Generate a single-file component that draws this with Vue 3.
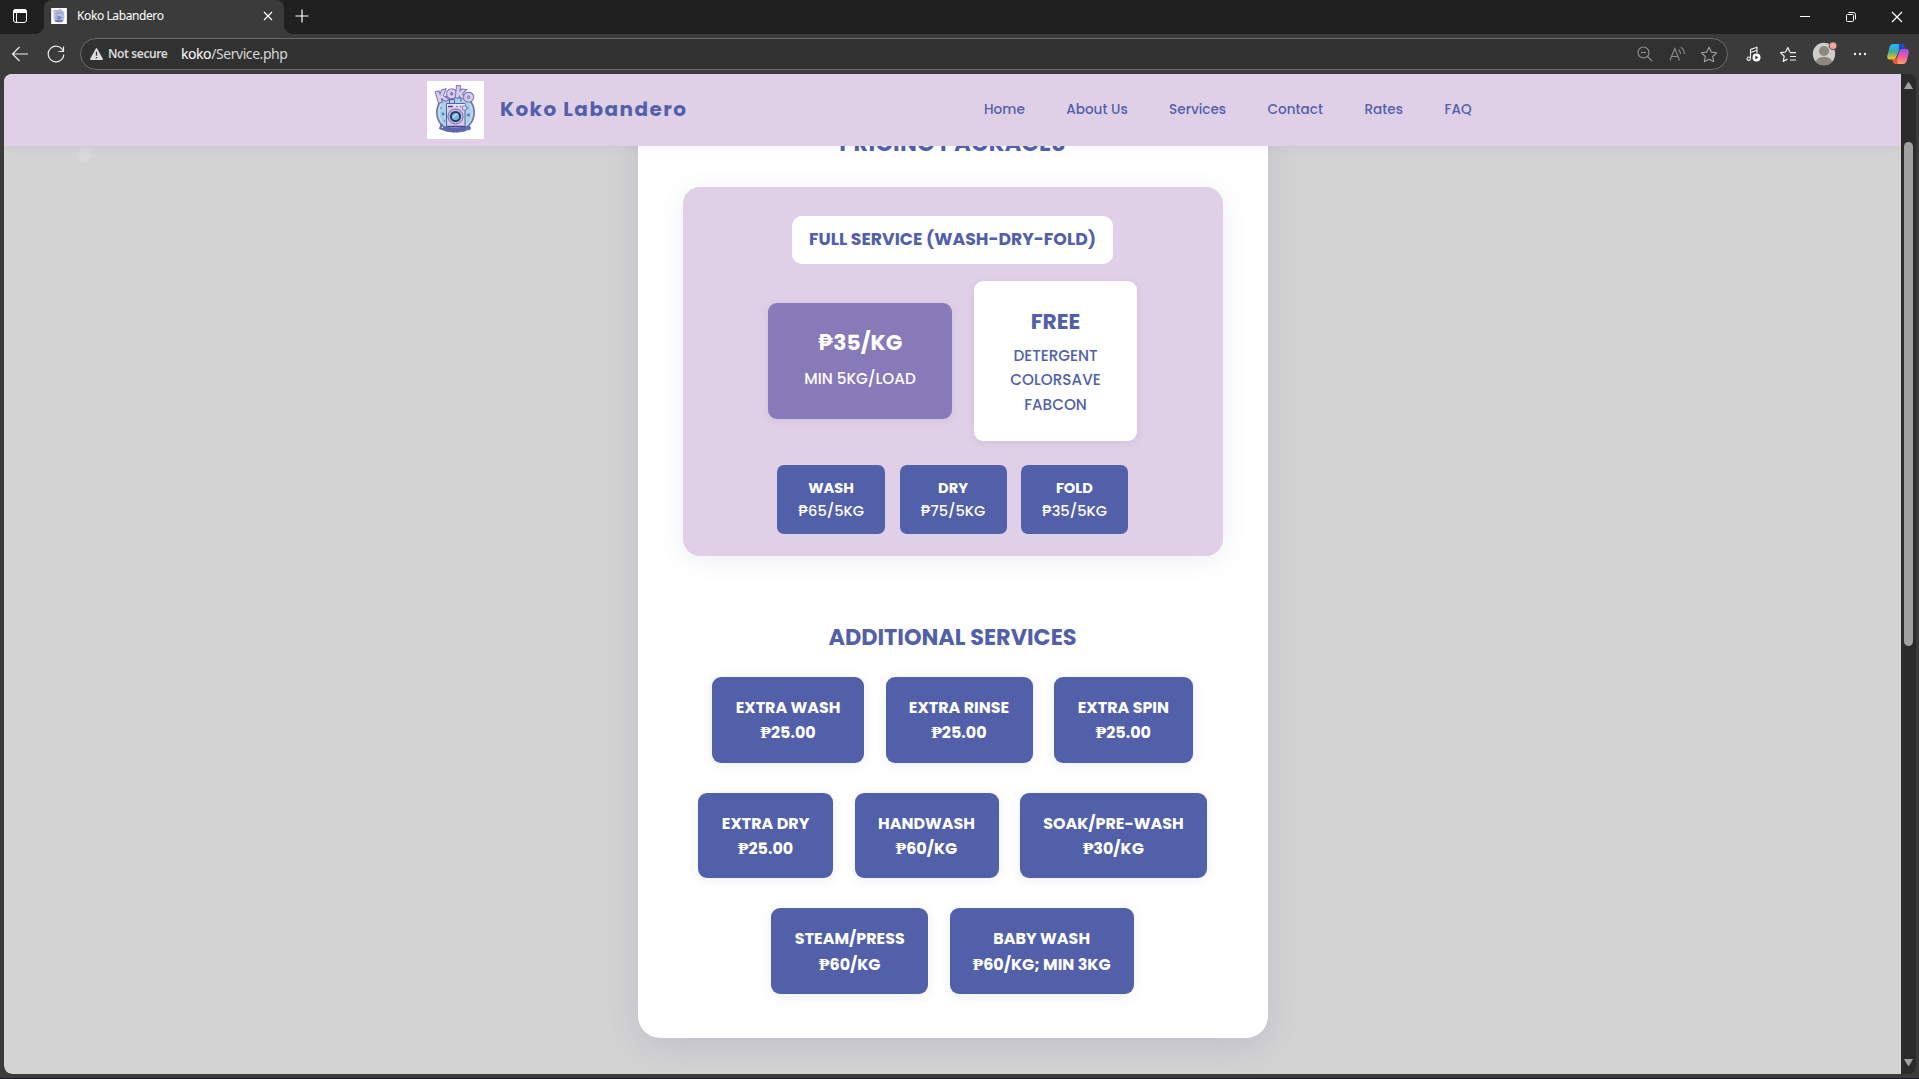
<script setup>
// Spreads the letters of a label so that it takes the given width in pixels.
const vFit = {
  mounted(el, { value }) {
    const natural = el.getBoundingClientRect().width
    const count = el.textContent.trim().length
    const spacing = (value - natural) / count
    el.style.letterSpacing = spacing.toFixed(3) + 'px'
  }
}

const nav = ['Home', 'About Us', 'Services', 'Contact', 'Rates', 'FAQ']

const free = ['DETERGENT', 'COLORSAVE', 'FABCON']

const steps = [
  { name: 'WASH', price: '₱65/5KG', box: 108 },
  { name: 'DRY', price: '₱75/5KG', box: 107 },
  { name: 'FOLD', price: '₱35/5KG', box: 107 }
]

const extras = [
  [
    { name: 'EXTRA WASH', price: '25.00', box: 152 },
    { name: 'EXTRA RINSE', price: '25.00', box: 147 },
    { name: 'EXTRA SPIN', price: '25.00', box: 139 }
  ],
  [
    { name: 'EXTRA DRY', price: '25.00', box: 135 },
    { name: 'HANDWASH', price: '60/KG', box: 144 },
    { name: 'SOAK/PRE-WASH', price: '30/KG', box: 187 }
  ],
  [
    { name: 'STEAM/PRESS', price: '60/KG', box: 157 },
    { name: 'BABY WASH', price: '60/KG; MIN 3KG', box: 184 }
  ]
]
</script>

<template>
  <div class="browser">
    <div class="tabs">
      <div class="workspace">
        <svg width="16" height="16" viewBox="0 0 16 16" fill="none" stroke="#fff">
          <rect x="1.500" y="1.500" width="13" height="13" rx="2.500" />
          <path d="M1.500 3.200q0-1.700 2-1.700h9q2 0 2 1.700v1.300h-13z" fill="#fff" />
          <path d="M4.500 5v9.500" />
        </svg>
      </div>
      <div class="tab">
        <svg class="favicon" width="16" height="16" viewBox="0 0 57 58"><use href="#koko" /></svg>
        <span class="tab-title" v-fit="86.5">Koko Labandero</span>
        <svg width="10" height="10" viewBox="0 0 10 10" stroke="#fff" stroke-width="1.200"><path d="M1 1l8 8M9 1l-8 8" /></svg>
      </div>
      <svg class="plus" width="14" height="14" viewBox="0 0 14 14" stroke="#fff" stroke-width="1.200"><path d="M7 .5v13M.5 7h13" /></svg>
      <div class="win">
        <span><svg width="12" height="12" stroke="#fff"><path d="M1 5.500h10" /></svg></span>
        <span><svg width="12" height="12" fill="none" stroke="#fff"><rect x="1.500" y="3.500" width="7" height="7" rx="1" /><path d="M3.500 1.500h5q2 0 2 2v5" /></svg></span>
        <span><svg width="12" height="12" stroke="#fff" stroke-width="1.200"><path d="M1 1l10 10M11 1l-10 10" /></svg></span>
      </div>
    </div>

    <div class="toolbar">
      <svg class="back" width="18" height="16" viewBox="0 0 18 16" fill="none" stroke="#eee" stroke-width="1.200"><path d="M17 8H1.500M8.500 1l-7 7 7 7" /></svg>
      <svg class="reload" width="18" height="18" viewBox="0 0 18 18" fill="none" stroke="#eee" stroke-width="1.200"><path d="M16.400 6.500A7.800 7.800 0 1 0 16.800 9.500M16.500 1.500v5h-5" /></svg>
      <div class="address">
        <svg width="13" height="12" viewBox="0 0 13 12"><path d="M6.500 .8L12.200 11.200H.8z" fill="#ddd" stroke="#ddd" stroke-width="1.400" stroke-linejoin="round" /><path d="M6.500 3.800v4M6.500 9v1.300" stroke="#333" stroke-width="1.300" /></svg>
        <span class="secure" v-fit="59.5">Not secure</span>
        <span class="url" v-fit="106.5"><b>koko</b>/Service.php</span>
        <div class="cells">
          <span><svg width="16" height="16" fill="none" stroke="#949494" stroke-width="1.100"><circle cx="6.500" cy="6.500" r="5.500" /><path d="M10.500 10.500l4.800 4.800M4 6.500h5" /></svg></span>
          <span><svg width="17" height="16" fill="none" stroke="#8c8c8c" stroke-width="1.100"><path d="M1 14.500L5.800 2.500 10.500 14.500M2.600 10.500h6.400M9.500 3.500q2 1.600 2 4.500M12 1.200q3.500 2.600 3.300 6.800" /></svg></span>
          <span><svg width="18" height="17" viewBox="0 0 18 17" fill="none" stroke="#a0a0a0" stroke-width="1.100" stroke-linejoin="round"><path d="M9 1.200l2.300 4.900 5.300.7-3.900 3.700 1 5.300L9 13.200l-4.700 2.600 1-5.300L1.400 6.800l5.300-.7z" /></svg></span>
        </div>
      </div>
      <div class="actions">
        <span><svg width="16" height="16" fill="none" stroke="#eee" stroke-width="1.100"><path d="M5.500 12.500V3.500l6.500-2.300v6M5.500 6.500l6.500-2.300" /><circle cx="3.700" cy="12.700" r="1.700" /><circle cx="11.500" cy="11.500" r="4" fill="#fff" stroke="none" /><path d="M10.300 9.500v4l3-2z" fill="#333" stroke="none" /></svg></span>
        <span><svg width="18" height="17" fill="none" stroke="#eee" stroke-width="1.200" stroke-linejoin="round"><path d="M11.300 5.800h-.5L8.800 1.500 6.600 6l-5 .7 3.600 3.500-1 5.200L8.500 13.100M11 6.700h6M11 10.500h6M11 14h6" /></svg></span>
        <span><svg class="avatar" width="26" height="24" viewBox="0 0 26 24"><clipPath id="av"><circle cx="12" cy="12" r="11.200" /></clipPath><circle cx="12" cy="12" r="11.200" fill="#d0cdca" /><circle cx="12" cy="9" r="5" fill="#8b8783" /><ellipse cx="12" cy="20" rx="8" ry="5.200" fill="#8b8783" clip-path="url(#av)" /><circle cx="21" cy="3.800" r="4.300" fill="#555" /><circle cx="21" cy="3.800" r="3.300" fill="#f9a29a" /></svg></span>
        <span><svg width="14" height="4" fill="#eee"><circle cx="2" cy="2" r="1.200" /><circle cx="7" cy="2" r="1.200" /><circle cx="12" cy="2" r="1.200" /></svg></span>
        <span>
          <svg width="22" height="22" viewBox="0 0 22 22">
            <defs>
              <linearGradient id="cpA" x1="0" y1="0" x2="0" y2="1"><stop offset=".1" stop-color="#28b4f5" /><stop offset=".5" stop-color="#3fa9a0" /><stop offset=".9" stop-color="#e3c51e" /></linearGradient>
              <linearGradient id="cpB" x1=".5" y1="0" x2=".3" y2="1"><stop offset="0" stop-color="#a44ee8" /><stop offset=".5" stop-color="#f0619a" /><stop offset="1" stop-color="#ffa65a" /></linearGradient>
            </defs>
            <path d="M6 1h8.500q2 0 2.700 3l.5 2h-3.500q-2 0-2.800 3L9 14.500q-.7 2-3 2H2.500Q-.3 16.500.4 12.500L2.300 5Q3.200 1 6 1z" fill="url(#cpA)" />
            <path d="M12 1h2.500q2 0 2.700 3l.5 2h-3.500q-1.800 0-2.500 2z" fill="#1848cf" />
            <path d="M16 21H8.500q-2 0-2.700-3l-.4-1.500h2Q9.600 16.500 10.400 14L12.500 8q.8-2 3-2h3.800q3 0 2.500 3.500L20 17q-1 4-4 4z" fill="url(#cpB)" />
            <path d="M5.400 16.500h2q2 0 2.800-2L10.800 21H8.500q-2 0-2.700-3z" fill="#f0543c" />
          </svg>
        </span>
      </div>
    </div>

    <div class="viewport">
      <div class="page">
        <header class="site-header">
          <svg class="logo" width="57" height="58" viewBox="0 0 57 58">
            <g id="koko">
              <rect width="57" height="58" fill="#fff" />
              <circle cx="28.500" cy="31.500" r="18.700" fill="#a5d3e4" stroke="#7d74b8" stroke-width="1.700" />
              <circle cx="28.500" cy="31.500" r="16.600" fill="none" stroke="#c5e5ee" />
              <g fill="#5c74b8">
                <circle cx="16" cy="33" r="1.400" /><circle cx="41.500" cy="34" r="1.500" />
                <circle cx="14" cy="27" r=".8" /><circle cx="41" cy="27" r=".8" />
                <circle cx="34" cy="19.500" r="1" /><circle cx="17.500" cy="40" r=".8" />
              </g>
              <path d="M22.500 22.500v-4h5v4" fill="#c4c2e8" stroke="#5c5fa8" />
              <path d="M19.500 22.500h18.500v24.500h-18.500z" fill="#d9cdec" stroke="#635ca8" />
              <path d="M20 23h18v3.500h-18z" fill="#e9e0f4" />
              <path d="M21 25.500h5M20 45.500h18" stroke="#3e4688" stroke-width="1.500" />
              <circle cx="30" cy="25.500" r=".8" fill="#5660a8" /><circle cx="33.500" cy="25.500" r=".8" fill="#5660a8" />
              <circle cx="37.500" cy="27" r="2.300" fill="#e5d9f1" stroke="#635ca8" stroke-width=".8" />
              <circle cx="28.500" cy="35.500" r="7.600" fill="#c1b8df" stroke="#7168ad" />
              <circle cx="28.500" cy="35.500" r="4.600" fill="#79bcd8" stroke="#2d3770" stroke-width="2" />
              <path d="M26 37q2-4 4.500-4" stroke="#d4f0f8" fill="none" />
              <g class="koko-word" text-anchor="middle">
                <text x="15" y="20.500" transform="rotate(-17 15 16)">K</text>
                <text x="24.500" y="17" transform="rotate(-5 24.500 13)">o</text>
                <text x="33.300" y="17" transform="rotate(7 33.300 12)">k</text>
                <text x="41.500" y="20.500" transform="rotate(18 41.500 16)">o</text>
              </g>
              <path id="ribbon" d="M12 47.500Q28.500 55 45 47.500" fill="none" />
              <text class="ribbon-word"><textPath href="#ribbon" textLength="33">Labandero</textPath></text>
            </g>
          </svg>
          <span class="brand" v-fit="187.5">Koko Labandero</span>
          <nav>
            <a v-for="n in nav" :key="n">{{ n }}</a>
          </nav>
        </header>
        <main>
          <i class="bubble"></i>
          <section class="card">
            <h2><span v-fit="226.5">PRICING PACKAGES</span></h2>
            <div class="panel">
              <div class="pill">FULL SERVICE (WASH-DRY-FOLD)</div>
              <div class="offers">
                <div class="offer rate">
                  <strong>₱35/KG</strong>
                  <p>MIN 5KG/LOAD</p>
                </div>
                <div class="offer free">
                  <strong>FREE</strong>
                  <p v-for="f in free" :key="f">{{ f }}</p>
                </div>
              </div>
              <div class="steps">
                <div v-for="s in steps" :key="s.name" class="step" :style="{ width: s.box + 'px' }">
                  <b>{{ s.name }}</b>
                  <p>{{ s.price }}</p>
                </div>
              </div>
            </div>
            <h2 class="second"><span v-fit="248">ADDITIONAL SERVICES</span></h2>
            <div class="extras">
              <div v-for="(row, i) in extras" :key="i" class="row">
                <div v-for="e in row" :key="e.name" class="extra" :style="{ width: e.box + 'px' }">
                  <p>{{ e.name }}</p>
                  <p><span class="peso">₱</span>{{ e.price }}</p>
                </div>
              </div>
            </div>
          </section>
        </main>
      </div>
      <div class="scrollbar">
        <svg width="9" height="8" fill="#a0a0a0"><path d="M3.600 .8q.9-1 1.800 0L9 7H0z" /></svg>
        <div class="thumb"></div>
        <svg class="down" width="9" height="8" fill="#a0a0a0"><path d="M3.600 6.200q.9 1 1.800 0L9 0H0z" /></svg>
      </div>
    </div>
  </div>
</template>

<style>
body { margin: 0; background: #3b3b3b; overflow: hidden; }
</style>

<style scoped>
.browser { width: 1919px; height: 1079px; box-sizing: border-box; background: #3b3b3b; border-bottom: 1px solid #1d1b22; display: flex; flex-direction: column; overflow: hidden; font-family: "Noto Sans", sans-serif; }
.browser * { box-sizing: border-box; }
svg { display: block; flex: none; }
p, h2 { margin: 0; white-space: nowrap; }
h2 span { display: inline-block; }

.koko-word { font: 800 15.500px Poppins, Inter, sans-serif; fill: #d9cdec; stroke: #6a62ae; stroke-width: 1.800px; paint-order: stroke; }
.ribbon-word { font: 900 7px Inter, sans-serif; fill: #5a63ad; stroke: #5a63ad; stroke-width: .6px; }

.tabs { height: 34px; flex: none; background: #202020; display: flex; }
.workspace { width: 44px; padding: 8px 0 0 12px; }
.tab { width: 240px; height: 34px; background: #3b3b3b; border-radius: 8px 8px 0 0; display: flex; align-items: center; padding: 0 11px 2px 7px; position: relative; }
.tab::before, .tab::after { content: ""; position: absolute; bottom: 0; width: 8px; height: 8px; }
.tab::before { left: -8px; background: radial-gradient(circle at 0 0, #202020 7.5px, #3b3b3b 8px); }
.tab::after { right: -8px; background: radial-gradient(circle at 100% 0, #202020 7.5px, #3b3b3b 8px); }
.tab-title { margin: 0 auto 1px 10px; font-size: 12px; color: #fff; white-space: nowrap; }
.plus { margin: 9px auto 0 10.500px; }
.win { display: flex; width: 137px; flex: none; height: 33px; }
.win span { width: 46px; flex: none; display: flex; align-items: center; justify-content: center; }

.toolbar { height: 40px; flex: none; display: flex; align-items: center; }
.back { margin-left: 11px; }
.reload { margin: 0 15px 0 18px; }
.address { width: 1648px; height: 32px; border: 1px solid #6b6b6b; border-radius: 16px; background: #313131; display: flex; align-items: center; padding: 0 2px 0 9px; }
.secure { margin: 0 0 1px 5px; font-size: 12px; font-weight: 600; color: #d8d8d8; white-space: nowrap; }
.url { margin: 0 0 1px 13.500px; font-size: 14px; color: #d5d5d5; white-space: nowrap; }
.url b { font-weight: 400; color: #fff; }
.cells { display: flex; margin-left: auto; }
.cells span { width: 32px; display: flex; justify-content: center; align-items: center; }
.actions { display: flex; margin-left: 7px; flex: none; height: 40px; }
.actions span { width: 36px; flex: none; display: flex; justify-content: center; align-items: center; }
.actions span:first-child { width: 35px; }
.actions span:last-child { width: 40px; }
.avatar { margin-left: 2px; }

.viewport { height: 1000px; margin: 0 3px 0 4px; display: flex; border-radius: 8px; overflow: hidden; background: #2b2b2b; font-family: Poppins, Inter, sans-serif; color: #5260a9; }
.page { width: 1897px; background: #d3d3d3; display: flex; flex-direction: column; border-bottom-left-radius: 8px; overflow: hidden; }
.site-header { height: 72px; flex: none; background: #e0d0e7; display: flex; align-items: center; padding-left: 423px; position: relative; z-index: 2; box-shadow: 0 2px 8px rgba(81, 95, 169, .06); }
.brand { margin: 0 auto 2px 16px; font-size: 20px; font-weight: 700; white-space: nowrap; }
.site-header nav { display: flex; gap: 41.450px; width: 490px; margin-right: 427px; flex: none; }
.site-header a { font-size: 13.600px; font-weight: 500; white-space: nowrap; }

main { height: 928px; display: flex; justify-content: center; position: relative; overflow: hidden; align-items: flex-start; padding-left: 1px; }
.bubble { position: absolute; left: 74px; top: 2px; width: 14px; height: 14px; border-radius: 50%; background: #d8d8d8; }
.card { width: 630px; height: 972px; margin-top: -80px; padding-top: 61.400px; background: #fff; border-radius: 22px; box-shadow: 0 8px 32px rgba(81, 75, 169, .15); display: flex; flex-direction: column; align-items: center; flex: none; }
h2 { height: 32px; line-height: 32px; font-size: 22.400px; font-weight: 700; padding-right: 1px; }
.panel { width: 540px; height: 369px; margin-top: 27.600px; padding: 29px 1px 0 0; background: #e0d0e7; border-radius: 17px; box-shadow: 0 4px 24px rgba(81, 95, 169, .1); display: flex; flex-direction: column; align-items: center; }
.pill { width: 321px; height: 48px; border-radius: 10px; background: #fff; text-align: center; font-size: 17.300px; font-weight: 700; line-height: 46px; white-space: nowrap; }
.offers { margin-top: 17px; display: flex; align-items: center; gap: 22px; }
.offer { border-radius: 9px; text-align: center; box-shadow: 0 2px 8px rgba(81, 95, 169, .12); }
.offer strong { display: block; font-size: 21.800px; line-height: 32px; font-weight: 700; white-space: nowrap; }
.offer p { font-size: 15.230px; line-height: 24.500px; font-weight: 500; }
.rate { width: 184px; height: 116px; padding-top: 24px; background: #877ab9; color: #fff; }
.rate p { margin-top: 8.500px; }
.free { width: 163px; height: 160px; padding-top: 25px; background: #fff; }
.free strong { margin-bottom: 5.800px; }
.steps { margin-top: 24px; display: flex; gap: 14.400px; }
.step { height: 69px; padding-top: 12px; border-radius: 7px; background: #5260a9; color: #fff; text-align: center; font-size: 14.600px; line-height: 23px; font-weight: 500; }
.step b { display: block; font-weight: 700; }
h2.second { margin-top: 65px; }
.extras { margin-top: 24px; padding-right: 1px; display: flex; flex-direction: column; gap: 30px; }
.row { display: flex; justify-content: center; gap: 21.400px; }
.extra { height: 85.700px; padding-top: 18px; border-radius: 9px; background: #5260a9; color: #fff; text-align: center; font-size: 15.930px; line-height: 25.200px; font-weight: 700; box-shadow: 0 2px 12px rgba(81, 95, 169, .1); }
.peso { font-family: "Liberation Serif", serif; font-size: 17px; line-height: 1; }

.scrollbar { width: 15px; background: #2b2b2b; display: flex; flex-direction: column; align-items: center; padding: 8px 0 7px; }
.thumb { width: 9px; height: 504px; margin-top: 52px; border-radius: 5px; background: #a0a0a0; }
.down { margin-top: auto; }
</style>
